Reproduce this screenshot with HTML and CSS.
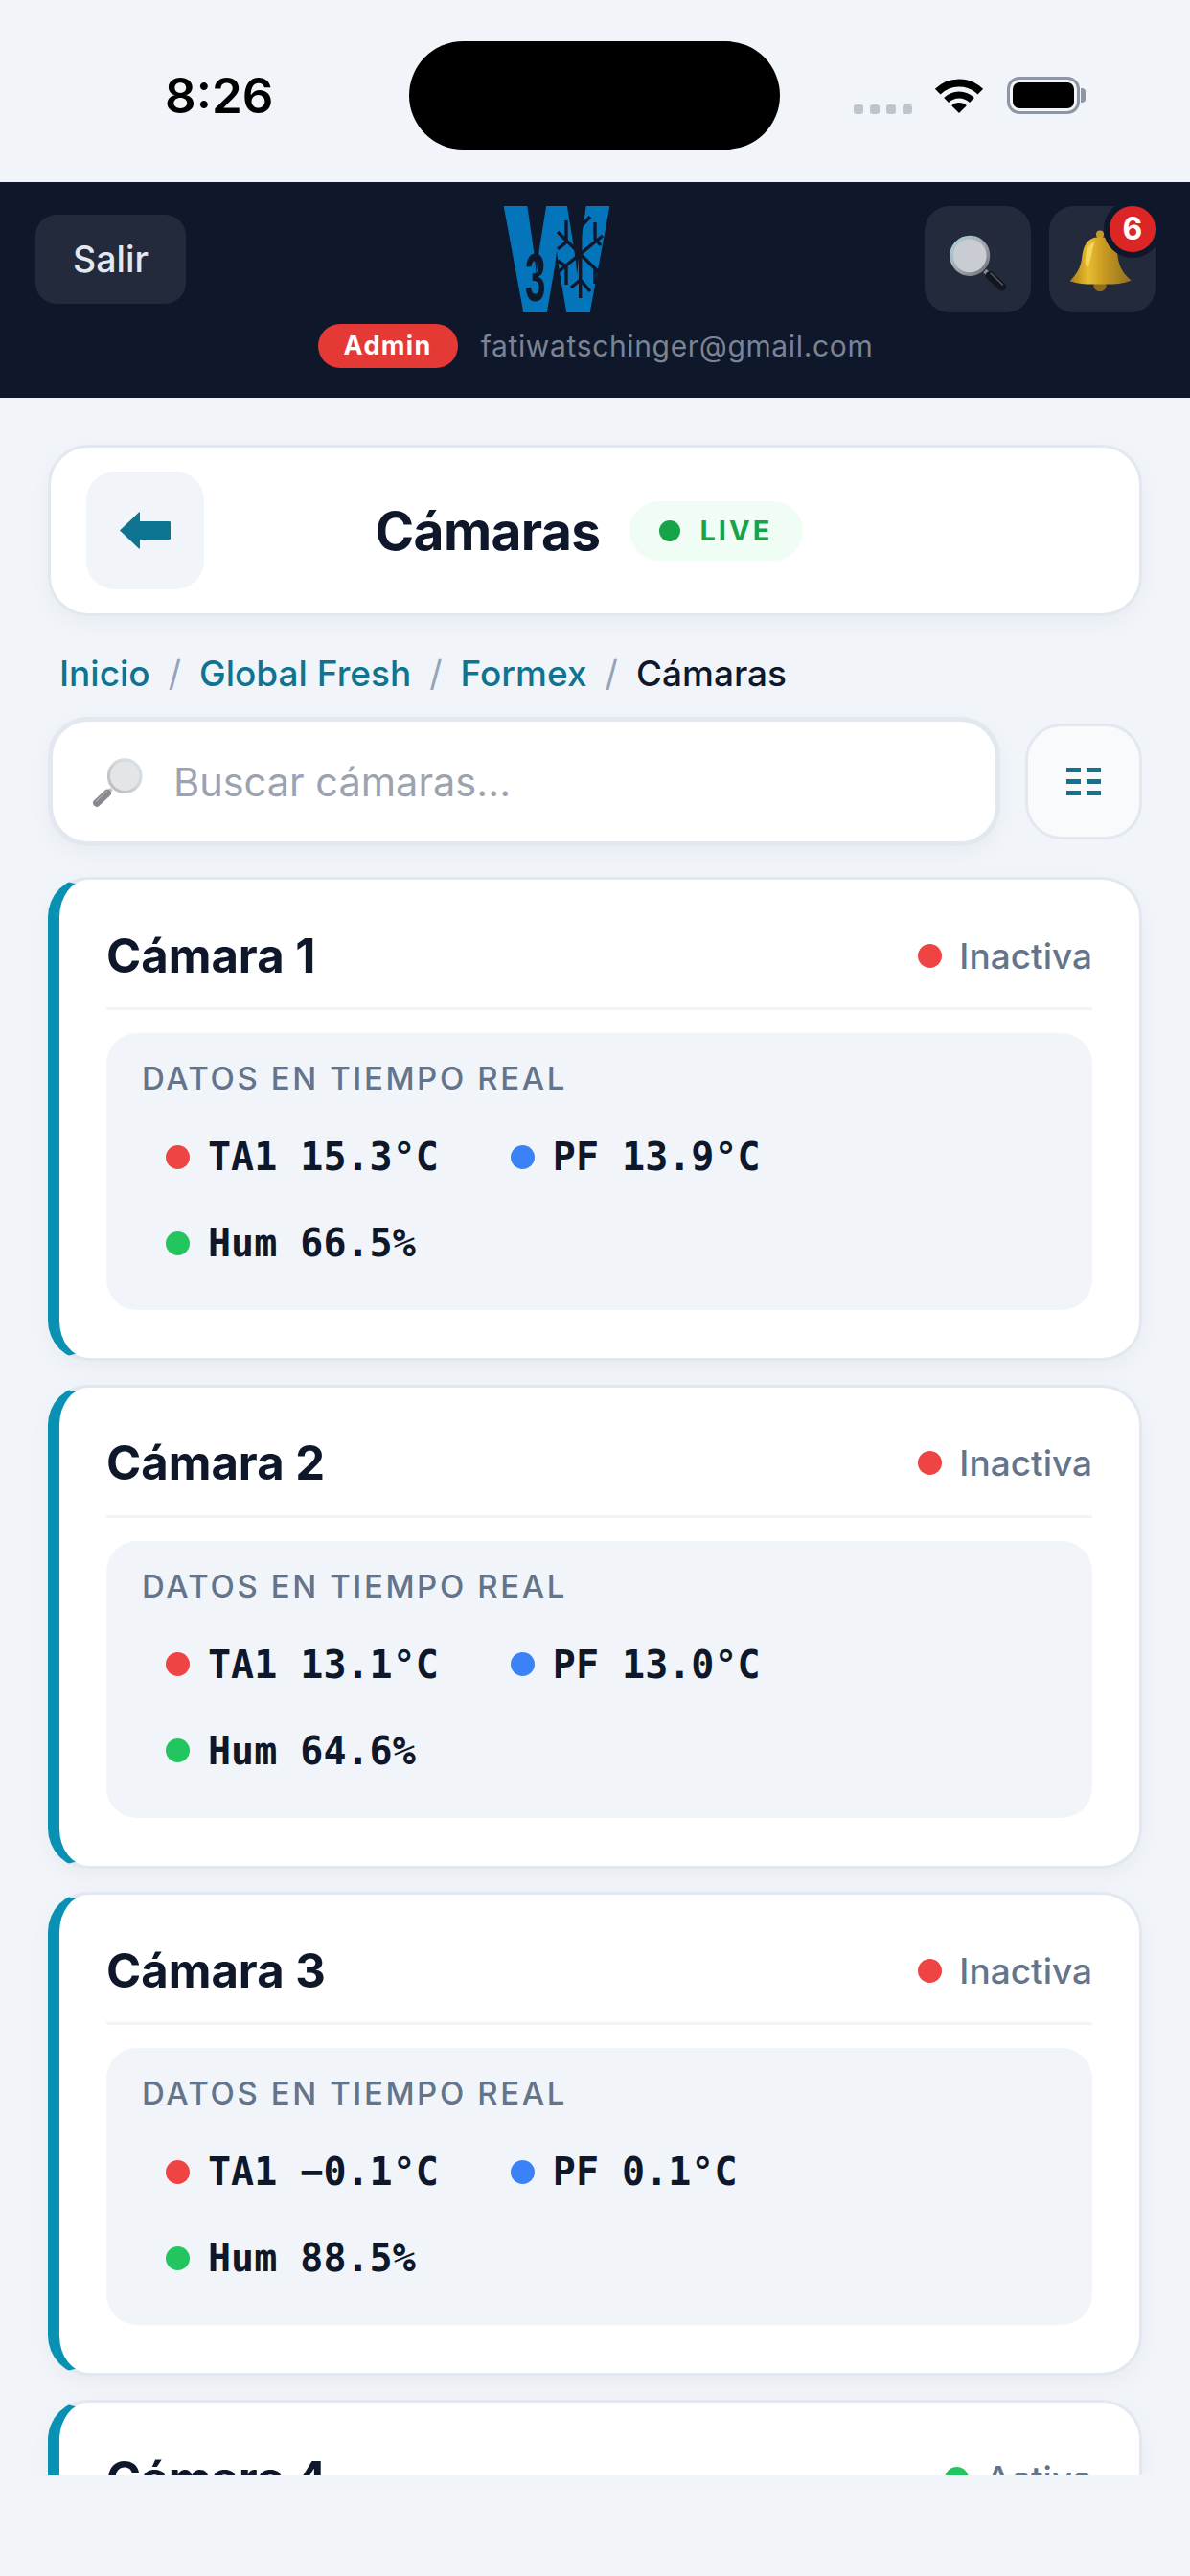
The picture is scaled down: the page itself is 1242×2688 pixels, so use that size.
FILE: index.html
```html
<!DOCTYPE html>
<html lang="es">
<head>
    <meta charset="UTF-8">
    <meta name="viewport" content="width=device-width, initial-scale=1.0">
    <title>Cámaras</title>
    <link rel="stylesheet" href="styles.css">
</head>
<body>
    <svg class="svg-defs" width="0" height="0">
        <defs>
            <linearGradient id="lens-rim" x1="0" y1="0" x2="1" y2="1">
                <stop offset="0" stop-color="#a9d3de"/>
                <stop offset="0.5" stop-color="#a6a9b0"/>
                <stop offset="1" stop-color="#6d7078"/>
            </linearGradient>
            <linearGradient id="bell-gold" x1="0" y1="0" x2="1" y2="0">
                <stop offset="0" stop-color="#a97c14"/>
                <stop offset="0.3" stop-color="#e8bd30"/>
                <stop offset="0.55" stop-color="#c99a22"/>
                <stop offset="1" stop-color="#8f7020"/>
            </linearGradient>
            <symbol id="magnifier" viewBox="100 110 200 190">
                <line x1="222" y1="232" x2="240" y2="248" stroke="#8a8d94" stroke-width="14"/>
                <line x1="238" y1="247" x2="276" y2="282" stroke="#14161f" stroke-width="27" stroke-linecap="round"/>
                <line x1="240" y1="240" x2="278" y2="276" stroke="#5a6070" stroke-width="4" stroke-linecap="round"/>
                <circle cx="175" cy="185" r="58" fill="#c9ccd3" stroke="url(#lens-rim)" stroke-width="11"/>
            </symbol>
        </defs>
    </svg>

    <div class="status-bar">
        <div class="status-time">8:26</div>
        <div class="status-island"></div>
        <div class="status-icons">
            <div class="signal-dots"><span></span><span></span><span></span><span></span></div>
            <svg class="wifi-icon" viewBox="0 0 52 37" width="52" height="37">
                <path d="M3.7 14.7A31.5 31.5 0 0 1 48.3 14.7" fill="none" stroke="#000" stroke-width="8"/>
                <path d="M12.6 23.6A19 19 0 0 1 39.4 23.6" fill="none" stroke="#000" stroke-width="7"/>
                <path d="M26 37L18.2 29.2A11 11 0 0 1 33.8 29.2Z" fill="#000"/>
            </svg>
            <div class="battery"><div class="battery-fill"></div></div>
        </div>
    </div>

    <div class="header">
        <div class="header-top">
            <div class="header-left">
                <button class="logout-button">Salir</button>
            </div>
            <svg class="logo" viewBox="0 0 110 109" width="110" height="109">
                <text class="logo-w" x="-1" y="109" transform="scale(0.7 1)">W</text>
                <text class="logo-three" transform="translate(23 98) scale(0.55 1)">3</text>
                <g class="logo-flake">
                    <path d="M80.7 14V95M57 26L104 72M56 69L104 30"/>
                    <path d="M91 10L80.7 21L71 12M71 84L80.7 76L91 88"/>
                    <path d="M66 14V36M57 44L67 36M57 56L67 63M66 61V81"/>
                    <path d="M96 16V33L102 40M96 64V80"/>
                </g>
            </svg>
            <div class="header-actions">
                <button class="icon-button">
                    <svg class="header-icon" width="67" height="63"><use href="#magnifier"/></svg>
                </button>
                <button class="icon-button">
                    <svg class="bell-icon" viewBox="490 110 210 200" width="70" height="67">
                        <circle cx="592" cy="126" r="12" fill="#c8992a"/>
                        <circle cx="592" cy="285" r="20" fill="#8f6a1e"/>
                        <path d="M592 134C556 134 540 158 536 196C533 232 516 254 498 272C530 284 560 282 592 282C624 282 658 284 690 270C668 252 652 232 648 196C644 158 628 134 592 134Z" fill="url(#bell-gold)"/>
                        <path d="M548 190C552 166 564 152 578 146C568 166 566 196 556 226C546 230 544 210 548 190Z" fill="#f4d75c"/>
                    </svg>
                    <span class="notif-badge">6</span>
                </button>
            </div>
        </div>
        <div class="header-user">
            <span class="role-pill">Admin</span>
            <span class="user-email">fatiwatschinger@gmail.com</span>
        </div>
    </div>

    <div class="content">
        <div class="title-card">
            <button class="back-button">
                <svg viewBox="0 0 53 39" width="53" height="39">
                    <path d="M0 19.5L20 0.5C20.8 0 21 0.5 21 1.5V10H51.5C52.5 10 53 10.5 53 11.5V27.5C53 28.5 52.5 29 51.5 29H21V37.5C21 38.5 20.8 39 20 38.5Z" fill="#0e7490"/>
                </svg>
            </button>
            <div class="title-group">
                <h1>Cámaras</h1>
                <div class="live-pill"><span class="live-dot"></span>LIVE</div>
            </div>
        </div>

        <div class="breadcrumb">
            <a href="#">Inicio</a>
            <span class="crumb-sep">/</span>
            <a href="#">Global Fresh</a>
            <span class="crumb-sep">/</span>
            <a href="#">Formex</a>
            <span class="crumb-sep">/</span>
            <span class="crumb-current">Cámaras</span>
        </div>

        <div class="search-row">
            <div class="search-box">
                <svg class="search-icon" width="58" height="55"><use href="#magnifier"/></svg>
                <input type="text" class="search-input" placeholder="Buscar cámaras...">
            </div>
            <button class="filter-button">
                <span></span><span></span><span></span><span></span><span></span><span></span>
            </button>
        </div>

        <div class="camera-list">
            <div class="camera-card">
                <div class="camera-head">
                    <h2>Cámara 1</h2>
                    <div class="camera-status"><span class="dot dot-red"></span>Inactiva</div>
                </div>
                <div class="data-box">
                    <div class="data-title">DATOS EN TIEMPO REAL</div>
                    <div class="data-chips">
                        <div class="chip"><span class="dot dot-red"></span>TA1 15.3°C</div>
                        <div class="chip"><span class="dot dot-blue"></span>PF 13.9°C</div>
                        <div class="chip"><span class="dot dot-green"></span>Hum 66.5%</div>
                    </div>
                </div>
            </div>

            <div class="camera-card">
                <div class="camera-head">
                    <h2>Cámara 2</h2>
                    <div class="camera-status"><span class="dot dot-red"></span>Inactiva</div>
                </div>
                <div class="data-box">
                    <div class="data-title">DATOS EN TIEMPO REAL</div>
                    <div class="data-chips">
                        <div class="chip"><span class="dot dot-red"></span>TA1 13.1°C</div>
                        <div class="chip"><span class="dot dot-blue"></span>PF 13.0°C</div>
                        <div class="chip"><span class="dot dot-green"></span>Hum 64.6%</div>
                    </div>
                </div>
            </div>

            <div class="camera-card">
                <div class="camera-head">
                    <h2>Cámara 3</h2>
                    <div class="camera-status"><span class="dot dot-red"></span>Inactiva</div>
                </div>
                <div class="data-box">
                    <div class="data-title">DATOS EN TIEMPO REAL</div>
                    <div class="data-chips">
                        <div class="chip"><span class="dot dot-red"></span>TA1 −0.1°C</div>
                        <div class="chip"><span class="dot dot-blue"></span>PF 0.1°C</div>
                        <div class="chip"><span class="dot dot-green"></span>Hum 88.5%</div>
                    </div>
                </div>
            </div>

            <div class="camera-card">
                <div class="camera-head">
                    <h2>Cámara 4</h2>
                    <div class="camera-status"><span class="dot dot-green"></span>Activa</div>
                </div>
            </div>
        </div>
    </div>
</body>
</html>
```

FILE: styles.css
```css
* {
    box-sizing: border-box;
}

body {
    font-family: Inter, "Noto Sans", sans-serif;
    background: #f1f5f9;
    color: #0f172a;
    margin: 0;
    width: 1242px;
    height: 2688px;
    overflow: hidden;
}

button {
    font-family: inherit;
    border: none;
    padding: 0;
}

.svg-defs {
    display: block;
    height: 0;
}

/* status bar */
.status-bar {
    height: 190px;
    padding-top: 43px;
    display: flex;
    align-items: flex-start;
}

.status-time {
    width: 427px;
    height: 113px;
    padding-left: 172px;
    line-height: 114px;
    font-size: 51px;
    font-weight: 600;
    color: #000;
}

.status-island {
    width: 387px;
    height: 113px;
    background: #000;
    border-radius: 57px;
}

.status-icons {
    height: 113px;
    margin-left: 77px;
    display: flex;
    align-items: center;
}

.signal-dots {
    display: flex;
    gap: 7px;
    margin-top: 28px;
}

.signal-dots span {
    width: 10px;
    height: 10px;
    border-radius: 3px;
    background: #bfc4cc;
}

.wifi-icon {
    margin-left: 23px;
}

.battery {
    position: relative;
    width: 76px;
    height: 39px;
    margin-left: 24px;
    padding: 3px;
    border: 3px solid #8e96a3;
    border-radius: 13px;
}

.battery::after {
    content: "";
    position: absolute;
    left: 74px;
    top: 9px;
    width: 5px;
    height: 15px;
    background: #8e96a3;
    border-radius: 0 4px 4px 0;
}

.battery-fill {
    height: 100%;
    background: #000;
    border-radius: 7px;
}

/* header */
.header {
    height: 225px;
    background: #0f172a;
    padding: 25px 36px 0 37px;
}

.header-top {
    display: grid;
    grid-template-columns: 1fr auto 1fr;
    align-items: center;
    height: 111px;
}

.logout-button {
    width: 157px;
    height: 93px;
    background: #222a3c;
    color: #e2e8f0;
    border-radius: 22px;
    font-size: 37.5px;
    font-weight: 500;
}

.logo {
    display: block;
    overflow: visible;
    margin-right: 84px;
}

.logo-w {
    font-family: Inter, sans-serif;
    font-size: 150px;
    font-weight: 900;
    fill: #0575bb;
    stroke: #0575bb;
    stroke-width: 2;
}

.logo-three {
    font-family: "Liberation Sans", sans-serif;
    font-size: 70px;
    font-weight: 700;
    fill: #0f172a;
}

.logo-flake path {
    fill: none;
    stroke: #0f172a;
    stroke-width: 3.4;
}

.header-actions {
    display: flex;
    justify-content: flex-end;
    gap: 19px;
}

.icon-button {
    position: relative;
    width: 111px;
    height: 111px;
    background: #222a3c;
    border-radius: 26px;
    display: flex;
    align-items: center;
    justify-content: center;
}

.header-icon {
    margin-top: 5px;
    margin-left: -1px;
}

.bell-icon {
    margin-top: 4px;
    margin-left: -4px;
}

.notif-badge {
    position: absolute;
    top: -6px;
    right: -6px;
    width: 60px;
    height: 60px;
    border: 6px solid #0f172a;
    border-radius: 50%;
    background: #dc2626;
    color: #fff;
    font-size: 32px;
    font-weight: 700;
    line-height: 48px;
    text-align: center;
}

.header-user {
    display: flex;
    justify-content: center;
    align-items: center;
    gap: 24px;
    margin-top: 12px;
}

.role-pill {
    width: 146px;
    height: 46px;
    background: #e53935;
    color: #fff;
    border-radius: 23px;
    font-size: 27px;
    font-weight: 700;
    letter-spacing: 1.4px;
    line-height: 46px;
    text-align: center;
}

.user-email {
    font-size: 30px;
    letter-spacing: 0.65px;
    color: #7a8494;
}

/* content */
.content {
    height: 2168px;
    overflow: hidden;
    padding: 49px 50px 0;
}

.title-card {
    height: 179px;
    background: #fff;
    border: 3px solid #e2e8f0;
    border-radius: 42px;
    padding: 25px 37px;
    display: flex;
    align-items: center;
    box-shadow: 0 8px 24px rgba(15, 23, 42, 0.04);
}

.back-button {
    width: 123px;
    height: 123px;
    flex-shrink: 0;
    background: #f1f5f9;
    border-radius: 30px;
    display: flex;
    align-items: center;
    justify-content: center;
}

.title-group {
    flex: 1;
    display: flex;
    align-items: center;
    justify-content: center;
    gap: 31px;
    padding-right: 135px;
}

.title-group h1 {
    margin: 0;
    font-size: 55px;
    font-weight: 700;
    letter-spacing: -0.6px;
}

.live-pill {
    height: 62px;
    width: 181px;
    padding-left: 31px;
    background: #f0fdf4;
    border-radius: 31px;
    display: flex;
    align-items: center;
    gap: 20px;
    color: #16a34a;
    font-size: 29px;
    font-weight: 700;
    letter-spacing: 3px;
}

.live-dot {
    width: 22px;
    height: 22px;
    border-radius: 50%;
    background: #16a34a;
}

.breadcrumb {
    height: 44px;
    margin-top: 37px;
    padding-left: 12px;
    display: flex;
    align-items: center;
    gap: 19px;
    font-size: 37px;
    font-weight: 500;
}

.breadcrumb a {
    color: #0e7490;
    text-decoration: none;
}

.crumb-sep {
    color: #94a3b8;
    font-weight: 400;
}

.crumb-current {
    color: #0f172a;
}

.search-row {
    display: flex;
    align-items: center;
    gap: 26px;
    margin-top: 24px;
}

.search-box {
    flex: 1;
    height: 135px;
    background: #fff;
    border: 5px solid #e2e8f0;
    border-radius: 42px;
    display: flex;
    align-items: center;
    padding-left: 39px;
    box-shadow: 0 8px 24px rgba(15, 23, 42, 0.04);
}

.search-icon {
    flex-shrink: 0;
    transform: scaleX(-1);
    opacity: 0.5;
}

.search-input {
    flex: 1;
    min-width: 0;
    margin-left: 29px;
    border: none;
    outline: none;
    background: transparent;
    font-family: inherit;
    font-size: 41.5px;
    padding: 0;
    color: #0f172a;
}

.search-input::placeholder {
    color: #9ca3af;
    opacity: 1;
}

.filter-button {
    width: 122px;
    height: 121px;
    flex-shrink: 0;
    background: #f8fafc;
    border: 3px solid #e2e8f0;
    border-radius: 38px;
    display: grid;
    grid-template-columns: 15px 15px;
    grid-auto-rows: 5px;
    gap: 7px 6px;
    justify-content: center;
    align-content: center;
}

.filter-button span {
    background: #0e7490;
}

/* camera cards */
.camera-list {
    margin-top: 32px;
    display: flex;
    flex-direction: column;
    gap: 24.7px;
}

.camera-card {
    flex-shrink: 0;
    background: #fff;
    border: 3px solid #e2e8f0;
    border-left: 12px solid #0891b2;
    border-radius: 42px;
    padding: 50px 49px 50px 49px;
    box-shadow: 0 8px 24px rgba(15, 23, 42, 0.04);
}

.camera-head {
    height: 86px;
    padding-bottom: 25px;
    border-bottom: 3px solid #f1f5f9;
    display: flex;
    align-items: center;
    justify-content: space-between;
}

.camera-head h2 {
    margin: 0;
    font-size: 49px;
    font-weight: 700;
}

.camera-status {
    display: flex;
    align-items: center;
    gap: 18px;
    font-size: 37px;
    font-weight: 500;
    color: #64748b;
}

.dot {
    width: 25px;
    height: 25px;
    flex-shrink: 0;
    border-radius: 50%;
}

.dot-red {
    background: #ef4444;
}

.dot-blue {
    background: #3b82f6;
}

.dot-green {
    background: #22c55e;
}

.data-box {
    height: 289px;
    margin-top: 24px;
    background: #f1f5f9;
    border-radius: 32px;
    padding: 27px 37px 0;
}

.data-title {
    height: 40px;
    line-height: 40px;
    font-size: 33px;
    font-weight: 500;
    letter-spacing: 2.6px;
    color: #64748b;
}

.data-chips {
    margin-top: 33px;
    display: flex;
    flex-wrap: wrap;
    gap: 32px 26px;
}

.chip {
    height: 58px;
    padding: 0 24px 0 25px;
    display: flex;
    align-items: center;
    gap: 19px;
    font-family: "DejaVu Sans Mono", "Liberation Mono", monospace;
    font-size: 40px;
    font-weight: 700;
    color: #0f172a;
}
```
